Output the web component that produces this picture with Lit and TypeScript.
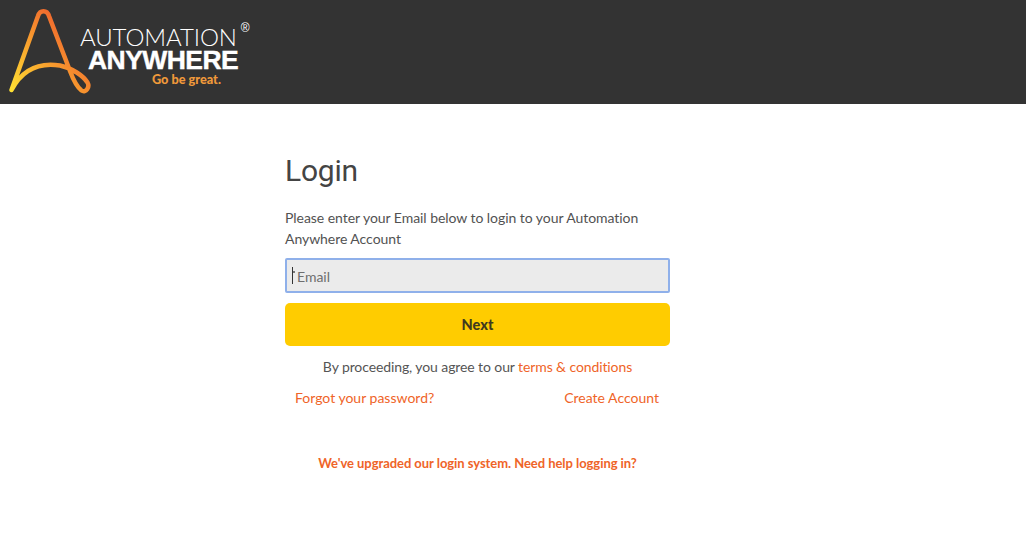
import { LitElement, html, css } from "lit";
import { customElement } from "lit/decorators.js";

@customElement("app-root")
export class AppRoot extends LitElement {
  static styles = css`
    :host { display: block; font-family: Lato, "Liberation Sans", sans-serif; color: #4a4a4a; background: #fff; height: 558px; overflow: hidden; }
    .header { height: 104px; background: #333333; display: flex; align-items: flex-start; padding-left: 8px; box-sizing: border-box; }
    .mark { width: 84px; height: 96px; margin-top: 6px; flex: none; }
    .brand { margin-left: -12px; margin-top: 25px; color: #fff; display: flex; flex-direction: column; }
    .top { display: flex; align-items: flex-start; }
    .auto { font-family: Lato, sans-serif; font-size: 24px; line-height: 24px; letter-spacing: -0.1px; font-weight: 300; white-space: nowrap; }
    .any { font-family: "Liberation Sans", sans-serif; font-size: 26.5px; line-height: 22px; font-weight: 700; letter-spacing: -0.55px; padding-left: 8px; white-space: nowrap; -webkit-text-stroke: .4px #fff; }
    .great { font-family: Lato, sans-serif; font-size: 12.7px; line-height: 14px; font-weight: 900; color: #f0993a; padding-left: 72px; margin-top: 1px; white-space: nowrap; }
    .reg { margin: -3px 0 0 4px; font: 400 12px/12px "Liberation Sans", sans-serif; }
    .main { width: 385px; margin-left: 285px; display: flex; flex-direction: column; }
    h1 { margin: 50px 0 0; font: 400 30px/34px Roboto, sans-serif; letter-spacing: -0.2px; color: #444; }
    .intro { margin: 19px 0 0; font-size: 14px; line-height: 21px; letter-spacing: -0.05px; color: #525252; }
    .field { margin-top: 9px; height: 35px; box-sizing: border-box; background: #ebebeb; border: 2px solid #8fb0ea; border-radius: 2px; display: flex; align-items: center; padding-left: 5px; font-size: 14px; color: #6e6e6e; }
    .caret { position: relative; width: 1px; height: 17px; background: #333; margin-right: 4px; }
    .caret::after { content: ""; position: absolute; left: 1px; top: 4px; width: 2px; height: 2px; background: #777; }
    .email { padding-top: 2px; }
    .next { margin-top: 10px; height: 43px; background: #ffcc00; border-radius: 5px; display: flex; align-items: center; justify-content: center; font-size: 14.5px; font-weight: 900; color: #3f3a1f; padding-bottom: 1px; box-sizing: border-box; }
    .terms { margin-top: 11px; text-align: center; font-size: 14px; line-height: 20px; letter-spacing: -0.1px; color: #555; }
    a { color: #ef6428; text-decoration: none; }
    .links { margin-top: 11px; display: flex; justify-content: space-between; padding: 0 11px 0 10px; font-size: 14px; line-height: 20px; }
    .help { margin-top: 45px; text-align: center; font-size: 13px; line-height: 20px; letter-spacing: -0.05px; font-weight: 700; }
  `;

  render() {
    return html`
      <div class="header">
        <svg class="mark" viewBox="8 6 84 96" fill="none">
          <defs>
            <linearGradient id="g" gradientUnits="userSpaceOnUse" x1="11" y1="90" x2="80" y2="30">
              <stop offset="0" stop-color="#ffe033"/>
              <stop offset=".45" stop-color="#f9a52e"/>
              <stop offset="1" stop-color="#ef5a2e"/>
            </linearGradient>
          </defs>
          <path d="M11.5 90 L38 16 C40 9.5 47 9.5 49 16 L70 71 C73 79 77 87 81.5 90.5 C86 93.5 90 87 87.5 82.5 C83.5 76 72 68 60 65.5 C38 62 22 70 11.5 90 Z"
            stroke="url(#g)" stroke-width="4.5" stroke-linejoin="round" stroke-linecap="round"/>
        </svg>
        <div class="brand">
          <div class="top"><span class="auto">AUTOMATION</span><span class="reg">®</span></div>
          <span class="any">ANYWHERE</span>
          <span class="great">Go be great.</span>
        </div>
      </div>
      <div class="main">
        <h1>Login</h1>
        <p class="intro">Please enter your Email below to login to your Automation Anywhere Account</p>
        <div class="field"><span class="caret"></span><span class="email">Email</span></div>
        <div class="next">Next</div>
        <div class="terms">By proceeding, you agree to our <a href="#">terms &amp; conditions</a></div>
        <div class="links"><a href="#">Forgot your password?</a><a href="#">Create Account</a></div>
        <div class="help"><a href="#">We've upgraded our login system. Need help logging in?</a></div>
      </div>
    `;
  }
}
